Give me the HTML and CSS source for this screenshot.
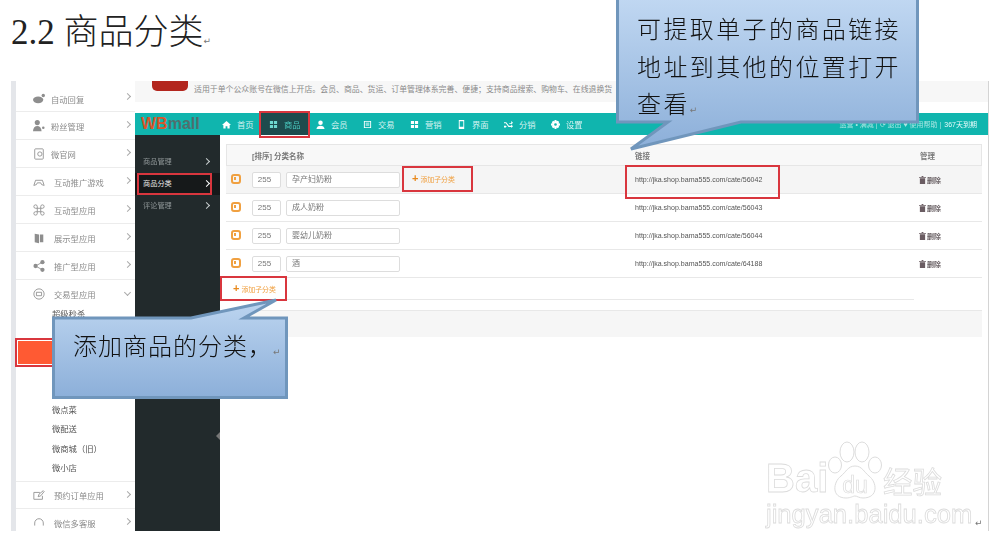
FILE: index.html
```html
<!DOCTYPE html>
<html lang="zh-CN">
<head>
    <meta charset="UTF-8">
    <title>2.2 商品分类</title>
    <link rel="stylesheet" href="styles.css">
</head>
<body>
    <div class="page">
        <h1 class="doc-title">2.2 <span class="cjk">商品分类</span><span class="ret">↵</span></h1>

        <div class="shot">
            <!-- left app menu -->
            <aside class="side">
                <div class="side-row first">
                    <svg class="side-ico" viewBox="0 0 14 14"><ellipse cx="6" cy="8" rx="6" ry="4"/><circle cx="12" cy="3" r="2"/></svg>
                    <span>自动回复</span><i class="chev"></i>
                </div>
                <div class="side-row">
                    <svg class="side-ico" viewBox="0 0 14 14"><circle cx="5" cy="3" r="3"/><path d="M0 13c0-8 10-8 10 0z"/><circle cx="12" cy="9" r="1.5"/></svg>
                    <span>粉丝管理</span><i class="chev"></i>
                </div>
                <div class="side-row">
                    <svg class="side-ico line" viewBox="0 0 14 14"><rect x="2" y="1" width="10" height="12" rx="1"/><circle cx="8" cy="7" r="2.5"/></svg>
                    <span>微官网</span><i class="chev"></i>
                </div>
                <div class="side-row wide">
                    <svg class="side-ico line" viewBox="0 0 14 14"><path d="M1 11l2-6h8l2 6-3-1-1-2H5l-1 2z"/></svg>
                    <span>互动推广游戏</span><i class="chev"></i>
                </div>
                <div class="side-row wide">
                    <svg class="side-ico line" viewBox="0 0 14 14"><path d="M5 5h4v4H5zM5 5H3a2 2 0 1 1 2-2zM9 5V3a2 2 0 1 1 2 2zM9 9h2a2 2 0 1 1-2 2zM5 9v2a2 2 0 1 1-2-2z"/></svg>
                    <span>互动型应用</span><i class="chev"></i>
                </div>
                <div class="side-row wide">
                    <svg class="side-ico" viewBox="0 0 14 14"><path d="M2 2l5 1v10l-5-1zM8 3h4v9H8z"/></svg>
                    <span>展示型应用</span><i class="chev"></i>
                </div>
                <div class="side-row wide">
                    <svg class="side-ico" viewBox="0 0 14 14"><circle cx="3" cy="7" r="2.5"/><circle cx="11" cy="2.5" r="2.5"/><circle cx="11" cy="11.5" r="2.5"/><path d="M3 7l8-4.500M3 7l8 4.500" class="thin"/></svg>
                    <span>推广型应用</span><i class="chev"></i>
                </div>
                <div class="side-row wide open">
                    <svg class="side-ico line" viewBox="0 0 14 14"><circle cx="7" cy="7" r="6"/><path d="M4 5h6v4H4z"/></svg>
                    <span>交易型应用</span><i class="chev down"></i>
                </div>
                <ul class="sub-list">
                    <li>超级秒杀</li>
                    <li></li>
                    <li class="active"></li>
                    <li></li>
                    <li></li>
                    <li>微点菜</li>
                    <li>微配送</li>
                    <li>微商城（旧）</li>
                    <li>微小店</li>
                </ul>
                <div class="side-row wide top-line">
                    <svg class="side-ico line" viewBox="0 0 14 14"><path d="M11 8v4H1V4h7M6 9l1-3 5-4 1 1-4 5z"/></svg>
                    <span>预约订单应用</span><i class="chev"></i>
                </div>
                <div class="side-row wide">
                    <svg class="side-ico line" viewBox="0 0 14 14"><path d="M2 10V7a5 5 0 0 1 10 0v3"/></svg>
                    <span>微信多客服</span><i class="chev"></i>
                </div>
            </aside>

            <div class="app">
                <div class="banner">
                    <div class="banner-logo"></div>
                    <p>适用于单个公众账号在微信上开店。会员、商品、货运、订单管理体系完善、便捷；支持商品搜索、购物车、在线退换货</p>
                </div>

                <header class="topbar">
                    <div class="brand"><b>WB</b>mall</div>
                    <nav class="top-nav">
                        <a><svg viewBox="0 0 10 10"><path d="M5 1L0 5.500h1.500V9.500h2.500V7h2v2.500h2.500V5.500H10z"/></svg>首页</a>
                        <a class="current"><svg viewBox="0 0 10 10"><path d="M1 1h3.500v3.500H1zM5.500 1H9v3.500H5.500zM1 5.500h3.500V9H1zM5.500 5.500H9V9H5.500z"/></svg>商品</a>
                        <a><svg viewBox="0 0 10 10"><circle cx="5" cy="3" r="2.500"/><path d="M0.500 10c0-5 9-5 9 0z"/></svg>会员</a>
                        <a><svg viewBox="0 0 10 10"><path fill-rule="evenodd" d="M1 1h8v8H1zM2 2v6h6V2zM3 3h4v1H3zM3 5h4v1H3z"/></svg>交易</a>
                        <a><svg viewBox="0 0 10 10"><path d="M1 1h3.500v3.500H1zM5.500 1H9v3.500H5.500zM1 5.500h3.500V9H1zM5.500 5.500H9V9H5.500z"/></svg>营销</a>
                        <a><svg viewBox="0 0 10 10"><path fill-rule="evenodd" d="M2 0h6v10H2zM3 1.500V7.500h4V1.500z"/></svg>界面</a>
                        <a><svg viewBox="0 0 10 10"><path d="M0 2.500h2.500l3 4H8V5l2 2-2 2V7.800H5L2 3.700H0zM0 6.300h2l1 1-1 1H0zM5.500 3.300L8 3.200V1l2 2-2 2V4.200H6.200z"/></svg>分销</a>
                        <a><svg viewBox="0 0 10 10"><path fill-rule="evenodd" d="M4 0h2l.3 1.500 1.300-.8 1.500 1.500-.8 1.300L10 4v2l-1.700.3.800 1.300-1.500 1.500-1.300-.8L6 10H4l-.3-1.700-1.300.8L.9 7.600l.8-1.300L0 6V4l1.700-.3-.8-1.300L2.400.9l1.300.8zM5 3.500a1.500 1.500 0 1 0 0 3 1.500 1.500 0 0 0 0-3z"/></svg>设置</a>
                    </nav>
                    <div class="top-user">运营 • 满减 | ⟳ 退出 ♥ 使用帮助 |<span>367天到期</span></div>
                </header>

                <div class="app-body">
                    <nav class="dark-nav">
                        <a>商品管理<i></i></a>
                        <a class="current">商品分类<i></i></a>
                        <a>评论管理<i></i></a>
                        <span class="collapse"></span>
                    </nav>

                    <main class="main">
                        <div class="grid head">
                            <span class="col-title">[排序] 分类名称</span>
                            <span class="col-link">链接</span>
                            <span>管理</span>
                        </div>

                        <div class="grid row hover">
                            <span class="drag"></span>
                            <span class="input num">255</span>
                            <span class="input name">孕产妇奶粉</span>
                            <a class="add in-row"><b>+</b>添加子分类</a>
                            <span class="url boxed">http://jka.shop.bama555.com/cate/56042</span>
                            <span class="del"><svg viewBox="0 0 8 9"><path d="M3 0h2v1h3v1H0V1h3zM1 2.500h6V9H1z"/></svg>删除</span>
                        </div>
                        <div class="grid row">
                            <span class="drag"></span>
                            <span class="input num">255</span>
                            <span class="input name">成人奶粉</span>
                            <span></span>
                            <span class="url">http://jka.shop.bama555.com/cate/56043</span>
                            <span class="del"><svg viewBox="0 0 8 9"><path d="M3 0h2v1h3v1H0V1h3zM1 2.500h6V9H1z"/></svg>删除</span>
                        </div>
                        <div class="grid row">
                            <span class="drag"></span>
                            <span class="input num">255</span>
                            <span class="input name">婴幼儿奶粉</span>
                            <span></span>
                            <span class="url">http://jka.shop.bama555.com/cate/56044</span>
                            <span class="del"><svg viewBox="0 0 8 9"><path d="M3 0h2v1h3v1H0V1h3zM1 2.500h6V9H1z"/></svg>删除</span>
                        </div>
                        <div class="grid row">
                            <span class="drag"></span>
                            <span class="input num">255</span>
                            <span class="input name">酒</span>
                            <span></span>
                            <span class="url">http://jka.shop.bama555.com/cate/64188</span>
                            <span class="del"><svg viewBox="0 0 8 9"><path d="M3 0h2v1h3v1H0V1h3zM1 2.500h6V9H1z"/></svg>删除</span>
                        </div>

                        <div class="add-row"><a class="add"><b>+</b>添加子分类</a></div>
                        <div class="save-strip"></div>
                    </main>
                </div>
            </div>
        </div>

        <!-- callouts sit on top of the screenshot -->
        <div class="callout callout-link">
            <svg viewBox="0 0 306 152" width="306" height="152">
                <defs>
                    <linearGradient id="fillA" x1="0" y1="0" x2="0" y2="1">
                        <stop offset="0" stop-color="#c1d8f2"/>
                        <stop offset="1" stop-color="#8cafd9"/>
                    </linearGradient>
                </defs>
                <path d="M1.500-4H301.500V122H125L15 149 52 122H1.500Z" fill="url(#fillA)" stroke="#7096bc" stroke-width="3"/>
            </svg>
            <p>可提取单子的商品链接地址到其他的位置打开查看<span class="ret">↵</span></p>
        </div>

        <div class="callout callout-add">
            <svg viewBox="0 0 236 101" width="236" height="101">
                <defs>
                    <linearGradient id="fillB" x1="0" y1="0" x2="0" y2="1">
                        <stop offset="0" stop-color="#bdd5f0"/>
                        <stop offset="1" stop-color="#8cafd9"/>
                    </linearGradient>
                </defs>
                <path d="M1.500 20H139L224 2 192 20H234.500V99.500H1.500Z" fill="url(#fillB)" stroke="#7096bc" stroke-width="3"/>
            </svg>
            <p>添加商品的分类，<span class="ret">↵</span></p>
        </div>

        <!-- watermark -->
        <div class="watermark">
            <div class="wm-top">
                <span class="wm-bai">Bai</span>
                <svg class="wm-paw" viewBox="0 0 56 60" width="56" height="60">
                    <ellipse cx="20" cy="12" rx="7" ry="10"/>
                    <ellipse cx="35" cy="12" rx="7" ry="10"/>
                    <ellipse cx="8" cy="25" rx="6.500" ry="8"/>
                    <ellipse cx="48" cy="25" rx="6.500" ry="8"/>
                    <path d="M28 26c7 0 9 6 14 10 8 6 10 22-6 22-4 0-6-2-8-2s-4 2-9 2C4 58 6 42 14 36c5-4 7-10 14-10z"/>
                    <text x="28" y="53" text-anchor="middle">du</text>
                </svg>
                <span class="wm-cn">经验</span>
            </div>
            <div class="wm-url">jingyan.baidu.com</div>
        </div>

        <span class="ret page-end">↵</span>
    </div>
</body>
</html>
```

FILE: styles.css
```css
* {
    margin: 0;
    padding: 0;
    box-sizing: border-box;
}

body {
    background: #fff;
    font-family: "Liberation Sans", "Noto Sans CJK SC", sans-serif;
}

.page {
    position: relative;
    width: 1000px;
    height: 549px;
    overflow: hidden;
}

.ret {
    font-family: "DejaVu Sans", sans-serif;
    font-size: 9px;
    color: #777;
    font-weight: normal;
}

.doc-title {
    height: 81px;
    padding: 7px 0 0 11px;
    font-family: "Liberation Serif", "Noto Sans CJK SC", serif;
    font-size: 35px;
    line-height: 44px;
    font-weight: normal;
    color: #222;
}

.doc-title .cjk {
    font-family: "Noto Sans CJK SC", sans-serif;
    font-weight: 300;
}

/* screenshot */
.shot {
    display: flex;
    width: 978px;
    height: 450px;
    margin-left: 11px;
    border-right: 1px solid #d4d4d4;
    overflow: hidden;
    filter: blur(0.5px);
}

.side {
    width: 124px;
    flex: none;
    border-left: 5px solid #e4e6ea;
    font-size: 8.3px;
    color: #8b8b8b;
}

.side-row {
    position: relative;
    display: flex;
    align-items: center;
    height: 28px;
    padding-left: 17px;
    border-bottom: 1px solid #ececec;
}

.side-row.first {
    height: 31px;
    padding-top: 6px;
}

.side-row.first .chev {
    top: 13px;
}

.side-row.open {
    border-bottom: none;
}

.side-row.top-line {
    border-top: 1px solid #ececec;
}

.side-ico {
    width: 12px;
    height: 12px;
    margin-right: 6px;
    flex: none;
    fill: #8e8e8e;
}

.side-ico .thin {
    fill: none;
    stroke: #8e8e8e;
}

.side-ico.line {
    fill: none;
    stroke: #8e8e8e;
    stroke-width: 1;
}

.side-row.wide span {
    margin-left: 3px;
}

.chev {
    position: absolute;
    right: 5px;
    top: 10px;
    width: 5px;
    height: 5px;
    border-top: 1px solid #aaa;
    border-right: 1px solid #aaa;
    transform: rotate(45deg);
}

.chev.down {
    transform: rotate(135deg);
}

.sub-list {
    list-style: none;
    margin-top: -3.5px;
    padding-left: 36px;
    height: 176.5px;
    color: #555;
}

.sub-list li {
    position: relative;
    height: 19.3px;
    line-height: 19.3px;
}

.sub-list li.active::before {
    content: '';
    position: absolute;
    left: -35px;
    right: 0;
    top: -3px;
    bottom: -3px;
    background: #ff5a33;
    box-shadow: inset 0 0 0 1px #fff, 0 0 0 2px #d9363e;
}

.app {
    flex: 1;
    min-width: 0;
    display: flex;
    flex-direction: column;
}

.banner {
    display: flex;
    height: 21px;
    background: #f7f7f7;
    font-size: 7.9px;
    color: #8a8a8a;
    white-space: nowrap;
    flex: none;
}

.banner-logo {
    width: 36px;
    height: 10px;
    margin: 0 6px 0 17px;
    background: #b3261e;
    border-radius: 0 0 5px 5px;
    flex: none;
}

.banner p {
    width: 423px;
    overflow: hidden;
    line-height: 18px;
}

.topbar {
    display: flex;
    align-items: center;
    height: 22px;
    margin-top: 11px;
    background: #10b5ae;
    flex: none;
}

.brand {
    width: 79px;
    padding-left: 6px;
    font-size: 16px;
    font-weight: bold;
    color: #4f6f6e;
}

.brand b {
    color: #d9552a;
}

.top-nav {
    display: flex;
    height: 100%;
}

.top-nav a {
    display: flex;
    align-items: center;
    width: 47px;
    padding-left: 8px;
    font-size: 8.3px;
    color: #d6f3f1;
}

.top-nav a svg {
    width: 9px;
    height: 9px;
    margin-right: 6px;
    fill: #fff;
    flex: none;
}

.top-nav a.current {
    position: relative;
    background: #1d4b4d;
    color: #49c9bf;
}

.top-nav a.current svg {
    fill: #6ed8cf;
}

.top-nav a.current::after {
    content: '';
    position: absolute;
    left: -2px;
    right: -2px;
    top: -2px;
    bottom: -3px;
    border: 2px solid #d9363e;
}

.top-user {
    margin-left: auto;
    padding-right: 11px;
    font-size: 7px;
    color: #a9e6e2;
    white-space: nowrap;
}

.top-user span {
    margin-left: 3px;
    color: #e6fafa;
}

.app-body {
    display: flex;
    flex: 1;
    min-height: 0;
}

.dark-nav {
    position: relative;
    width: 85px;
    flex: none;
    padding-top: 16px;
    background: #222a2c;
    font-size: 7.2px;
    color: #8f9698;
}

.dark-nav a {
    position: relative;
    display: block;
    height: 22px;
    line-height: 22px;
    padding-left: 8px;
}

.dark-nav a i {
    position: absolute;
    right: 11px;
    top: 8px;
    width: 5px;
    height: 5px;
    border-top: 1.5px solid #c9cfd0;
    border-right: 1.5px solid #c9cfd0;
    transform: rotate(45deg);
}

.dark-nav a.current {
    background: #16191a;
    color: #e6e6e6;
}

.dark-nav a.current i {
    border-color: #fff;
}

.dark-nav a.current::after {
    content: '';
    position: absolute;
    left: 2px;
    right: 8px;
    top: 0;
    bottom: 0;
    border: 2px solid #d9363e;
}

.collapse {
    position: absolute;
    right: 0;
    top: 297px;
    border: 4px solid transparent;
    border-right-color: #777;
    border-left: none;
}

.main {
    flex: 1;
    min-width: 0;
    padding: 9px 6px 0;
    font-size: 8px;
    color: #666;
}

.grid {
    display: grid;
    grid-template-columns: 26px 34px 116px 233px 284px 1fr;
    align-items: center;
}

.head {
    height: 22px;
    background: #f8f8f8;
    border: 1px solid #e6e6e6;
    font-size: 7.500px;
    color: #777;
    font-weight: bold;
}

.head .col-title {
    grid-column: 2 / 5;
    margin-left: -1px;
}

.head .col-link {
    grid-column: 5;
    margin-left: -1px;
}

.row {
    height: 28px;
    border-bottom: 1px solid #e8e8e8;
}

.row.hover {
    background: #f5f5f5;
}

.drag {
    position: relative;
    width: 10px;
    height: 10px;
    margin-left: 5px;
    margin-top: -2px;
    border: 2px solid #f0a040;
    border-radius: 3px;
}

.drag::after {
    content: '';
    position: absolute;
    left: 1px;
    top: 1.500px;
    width: 2px;
    height: 3px;
    background: #f0a040;
}

.input {
    display: block;
    height: 16px;
    line-height: 14px;
    background: #fff;
    border: 1px solid #ddd;
    border-radius: 2px;
    color: #777;
}

.input.num {
    width: 29px;
    text-align: center;
    padding-right: 4px;
}

.input.name {
    width: 114px;
    padding-left: 5px;
}

.add {
    display: flex;
    align-items: center;
    font-size: 6.900px;
    color: #f0a040;
}

.add b {
    margin-right: 2px;
    font-size: 11px;
    line-height: 1;
    color: #e8891c;
}

.add.in-row {
    width: 71px;
    height: 26px;
    margin-top: -2px;
    padding-left: 8px;
    border: 2px solid #d9363e;
}

.url {
    position: relative;
    font-size: 7.050px;
    color: #555;
    white-space: nowrap;
}

.url.boxed::after {
    content: '';
    position: absolute;
    left: -10px;
    top: -11px;
    width: 151px;
    height: 30px;
    border: 2px solid #d9363e;
}

.del {
    display: flex;
    align-items: center;
    font-size: 7px;
    color: #6a6165;
    font-weight: bold;
}

.del svg {
    width: 7px;
    height: 8px;
    margin-right: 1px;
    fill: #6a5c62;
}

.add-row {
    width: 694px;
    height: 24px;
    margin-left: -6px;
    border-bottom: 1px solid #e8e8e8;
}

.add-row .add {
    position: relative;
    width: 67px;
    height: 25px;
    margin-top: -2px;
    padding-left: 11px;
    border: 2px solid #d9363e;
}

.save-strip {
    height: 27px;
    margin: 10px 0 0 -6px;
    background: #f6f6f6;
    border-top: 1px solid #e8e8e8;
}

/* callouts */
.callout {
    position: absolute;
}

.callout svg {
    display: block;
}

.callout p {
    position: absolute;
    font-family: "Noto Sans CJK SC", sans-serif;
    font-size: 24px;
    font-weight: 300;
    color: #111;
}

.callout-link {
    left: 616px;
    top: 0;
}

.callout-link p {
    left: 21px;
    top: 9px;
    width: 270px;
    line-height: 37.500px;
    letter-spacing: 2.400px;
}

.callout-add {
    left: 52px;
    top: 298px;
}

.callout-add p {
    left: 21px;
    top: 29px;
    white-space: nowrap;
    line-height: 36px;
    letter-spacing: 1px;
}

/* watermark */
.watermark {
    position: absolute;
    left: 766px;
    top: 440px;
    width: 180px;
    color: #fff;
    -webkit-text-stroke: 0.8px #dcdcdc;
}

.wm-top {
    display: flex;
    align-items: flex-end;
    height: 60px;
}

.wm-bai {
    width: 61px;
    flex: none;
    font-size: 40px;
    font-weight: bold;
    line-height: 44px;
}

.wm-paw {
    flex: none;
    fill: #fff;
    stroke: #dcdcdc;
    stroke-width: 1;
}

.wm-paw text {
    font-size: 23px;
    font-family: "Liberation Sans", sans-serif;
    stroke-width: 0.7;
}

.wm-cn {
    font-family: "Noto Sans CJK SC", sans-serif;
    font-size: 29.5px;
    line-height: 40px;
}

.wm-url {
    font-size: 25.6px;
    line-height: 28px;
    white-space: nowrap;
}

.page-end {
    position: absolute;
    left: 975px;
    top: 518px;
}
```
